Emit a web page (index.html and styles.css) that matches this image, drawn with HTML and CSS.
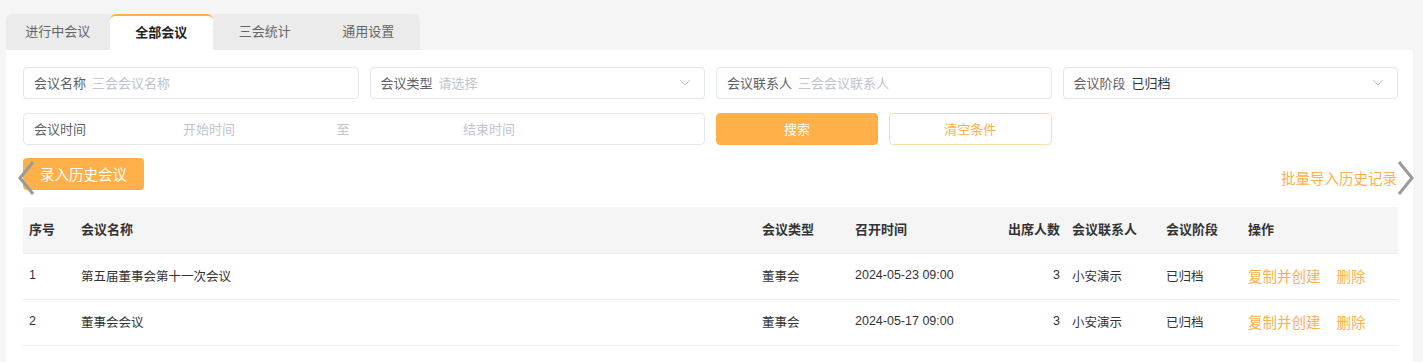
FILE: index.html
```html
<!DOCTYPE html>
<html lang="zh-CN">
<head>
	<meta charset="UTF-8">
	<title>会议管理</title>
	<link rel="stylesheet" href="styles.css">
</head>
<body>

<div class="tabs">
	<div class="tab">进行中会议</div>
	<div class="tab active">全部会议</div>
	<div class="tab">三会统计</div>
	<div class="tab">通用设置</div>
</div>

<main class="panel">
	<form class="filters">
		<div class="field">
			<span class="label">会议名称</span>
			<span class="placeholder">三会会议名称</span>
		</div>
		<div class="field">
			<span class="label">会议类型</span>
			<span class="placeholder">请选择</span>
			<svg class="arrow-down" width="12" height="7" viewBox="0 0 12 7"><polyline points="1,1 6,6 11,1" fill="none" stroke="#c0c4cc" stroke-width="1"/></svg>
		</div>
		<div class="field">
			<span class="label">会议联系人</span>
			<span class="placeholder">三会会议联系人</span>
		</div>
		<div class="field">
			<span class="label">会议阶段</span>
			<span class="value">已归档</span>
			<svg class="arrow-down" width="12" height="7" viewBox="0 0 12 7"><polyline points="1,1 6,6 11,1" fill="none" stroke="#c0c4cc" stroke-width="1"/></svg>
		</div>

		<div class="field date-range">
			<span class="label range-label">会议时间</span>
			<span class="placeholder range-start">开始时间</span>
			<span class="placeholder range-sep">至</span>
			<span class="placeholder range-end">结束时间</span>
		</div>
		<div class="buttons">
			<button type="button" class="btn-search">搜索</button>
			<button type="button" class="btn-clear">清空条件</button>
		</div>
	</form>

	<div class="toolbar">
		<button type="button" class="btn-add">录入历史会议</button>
		<a class="link-import">批量导入历史记录</a>
	</div>

	<table class="meetings">
		<colgroup>
			<col style="width:52px">
			<col style="width:681px">
			<col style="width:93px">
			<col style="width:141px">
			<col style="width:76px">
			<col style="width:94px">
			<col style="width:82px">
			<col>
		</colgroup>
		<thead>
			<tr>
				<th>序号</th>
				<th>会议名称</th>
				<th>会议类型</th>
				<th>召开时间</th>
				<th class="num">出席人数</th>
				<th>会议联系人</th>
				<th>会议阶段</th>
				<th>操作</th>
			</tr>
		</thead>
		<tbody>
			<tr>
				<td>1</td>
				<td>第五届董事会第十一次会议</td>
				<td>董事会</td>
				<td>2024-05-23 09:00</td>
				<td class="num">3</td>
				<td>小安演示</td>
				<td>已归档</td>
				<td class="actions"><a>复制并创建</a><a>删除</a></td>
			</tr>
			<tr>
				<td>2</td>
				<td>董事会会议</td>
				<td>董事会</td>
				<td>2024-05-17 09:00</td>
				<td class="num">3</td>
				<td>小安演示</td>
				<td>已归档</td>
				<td class="actions"><a>复制并创建</a><a>删除</a></td>
			</tr>
		</tbody>
	</table>
</main>

<!-- carousel arrows lie over the page -->
<svg class="nav-arrow nav-prev" width="18" height="36" viewBox="0 0 18 36"><polyline points="16,2 3,18 16,34" fill="none" stroke="#9a9a9a" stroke-width="3"/></svg>
<svg class="nav-arrow nav-next" width="18" height="36" viewBox="0 0 18 36"><polyline points="2,2 15,18 2,34" fill="none" stroke="#9a9a9a" stroke-width="3"/></svg>

</body>
</html>
```

FILE: styles.css
```css
:root {
	--orange: #ffb048;
	--orange-text: #ffb04d;
	--border: #e4e7ed;
	--line: #ebeef5;
}

body {
	margin: 0;
	background-color: #f5f5f5;
	font-family: "Liberation Sans", "Noto Sans CJK SC", sans-serif;
	font-size: 13px;
	color: #333;
	position: relative;
	height: 362px;
	overflow: hidden;
}

.tabs {
	display: flex;
	width: 414px;
	margin: 14px 0 0 6px;
	background-color: #ebebeb;
	border-radius: 6px 6px 0 0;
}

.tab {
	flex: 1;
	height: 36px;
	line-height: 35px;
	text-align: center;
	color: #666;
	box-sizing: border-box;
}

.tab.active {
	background-color: #fff;
	color: #222;
	font-weight: bold;
	border-top: 2px solid var(--orange);
	border-radius: 6px 6px 0 0;
	line-height: 33px;
}

.panel {
	display: block;
	width: 1407px;
	margin-left: 6px;
	box-sizing: border-box;
	padding: 17px 15px 0 17px;
	background-color: #fff;
	min-height: 312px;
}

.filters {
	display: grid;
	grid-template-columns: repeat(4, 1fr);
	column-gap: 11px;
	row-gap: 14px;
}

.field {
	display: flex;
	align-items: center;
	height: 32px;
	padding: 0 13px 1px 10px;
	border: 1px solid var(--border);
	border-radius: 4px;
	box-sizing: border-box;
}

.label {
	color: #606266;
	margin-right: 6px;
	white-space: nowrap;
}

.placeholder {
	color: #c0c4cc;
}

.value {
	color: #333;
}

.arrow-down {
	margin-left: auto;
}

.date-range {
	grid-column: span 2;
}

.range-label {
	width: 57px;
	margin: 0;
	flex: none;
}

.range-start {
	width: 236px;
	text-align: center;
}

.range-sep {
	width: 32px;
	text-align: center;
}

.range-end {
	width: 260px;
	text-align: center;
}

.buttons {
	display: grid;
	grid-template-columns: 1fr 1fr;
	column-gap: 11px;
}

.buttons button,
.btn-add {
	font-family: inherit;
	border-radius: 4px;
	cursor: pointer;
	height: 32px;
	padding: 0 0 1px;
}

.btn-search {
	background-color: var(--orange);
	border: 1px solid var(--orange);
	color: #fff;
	font-size: 13px;
}

.btn-clear {
	background-color: #fff;
	border: 1px solid #ffd9a6;
	color: var(--orange-text);
	font-size: 13px;
}

.toolbar {
	display: flex;
	justify-content: space-between;
	align-items: flex-end;
	margin-top: 13px;
}

.btn-add {
	width: 121px;
	background-color: var(--orange);
	border: none;
	color: #fff;
	font-size: 14.5px;
}

.link-import {
	color: var(--orange-text);
	font-size: 14.5px;
	line-height: 20px;
	margin-right: 1px;
	margin-bottom: 1px;
	cursor: pointer;
}

.meetings {
	width: 100%;
	margin-top: 17px;
	border-collapse: collapse;
	table-layout: fixed;
}

.meetings th,
.meetings td {
	height: 46px;
	padding: 0 6px 2px;
	text-align: left;
	white-space: nowrap;
	border-bottom: 1px solid var(--line);
	box-sizing: border-box;
}

.meetings th {
	background-color: #f5f5f5;
	font-weight: bold;
	color: #333;
}

.meetings td {
	color: #333;
	font-size: 12.5px;
}

.meetings .num {
	text-align: right;
}

.actions a {
	color: var(--orange-text);
	font-size: 14.5px;
	margin-right: 16px;
	cursor: pointer;
}

.nav-arrow {
	position: absolute;
	top: 160px;
}

.nav-prev {
	left: 17px;
}

.nav-next {
	left: 1397px;
}
```
